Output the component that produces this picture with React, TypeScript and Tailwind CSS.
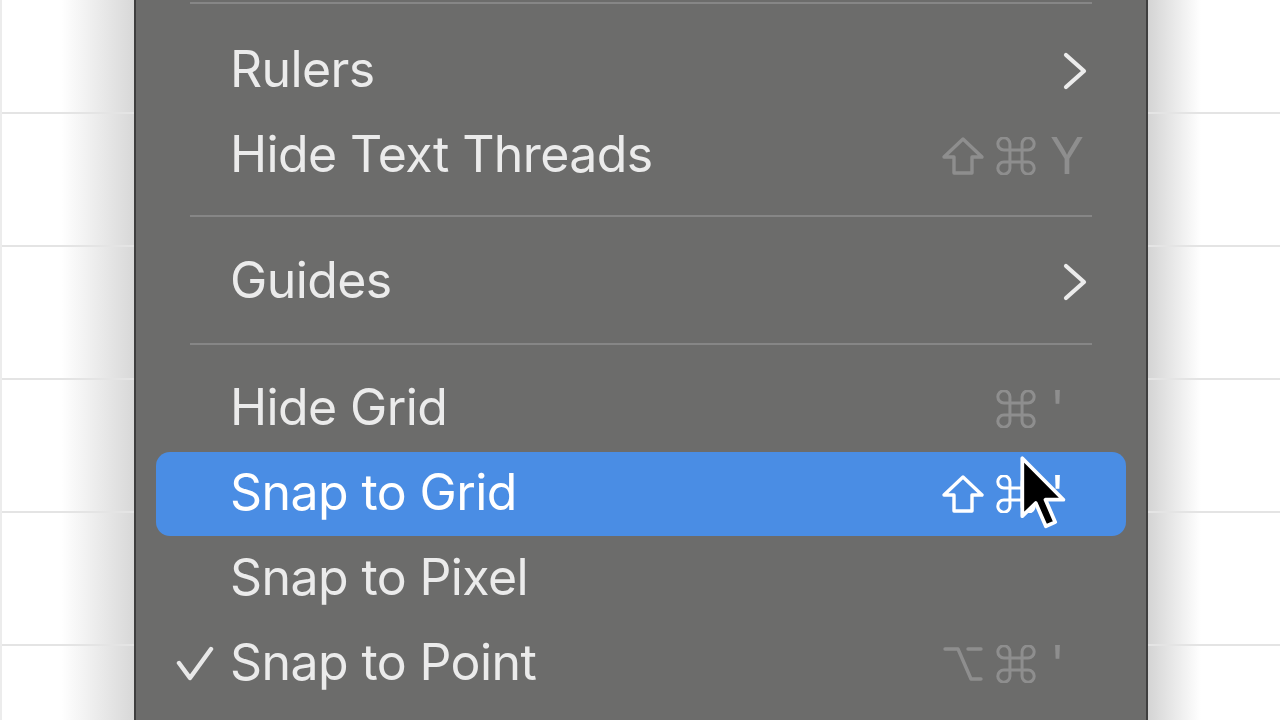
import React from "react";

const FONT = { fontFamily: "Inter, 'Noto Sans', 'Liberation Sans', sans-serif" };

function GridStrip({ className }: { className: string }) {
  return (
    <div className={`flex flex-col ${className}`}>
      <div className="h-[114px] shrink-0 border-b-2 border-[#e4e4e4]" />
      <div className="h-[133px] shrink-0 border-b-2 border-[#e4e4e4]" />
      <div className="h-[133px] shrink-0 border-b-2 border-[#e4e4e4]" />
      <div className="h-[133px] shrink-0 border-b-2 border-[#e4e4e4]" />
      <div className="h-[133px] shrink-0 border-b-2 border-[#e4e4e4]" />
    </div>
  );
}

function Shift({ color }: { color: string }) {
  return (
    <svg width="44" height="40" viewBox="0 0 44 40" fill="none">
      <path
        d="M22 3 L41 21 L31 21 L31 37 L13 37 L13 21 L3 21 Z"
        stroke={color}
        strokeWidth="3.4"
        strokeLinejoin="round"
      />
    </svg>
  );
}

function Cmd({ color }: { color: string }) {
  return (
    <svg width="40" height="38" viewBox="2.6 2.6 18.8 18.8" fill="none">
      <path
        d="M18 3a3 3 0 0 0-3 3v12a3 3 0 0 0 3 3 3 3 0 0 0 3-3 3 3 0 0 0-3-3H6a3 3 0 0 0-3 3 3 3 0 0 0 3 3 3 3 0 0 0 3-3V6a3 3 0 0 0-3-3 3 3 0 0 0-3 3 3 3 0 0 0 3 3h12a3 3 0 0 0 3-3 3 3 0 0 0-3-3z"
        stroke={color}
        strokeWidth="1.5"
      />
    </svg>
  );
}

function Opt({ color }: { color: string }) {
  return (
    <svg width="40" height="38" viewBox="0 0 40 38" fill="none">
      <path d="M2 4 H15 L28 34 H38" stroke={color} strokeWidth="3.4" strokeLinecap="round" strokeLinejoin="round" />
      <path d="M25 4 H38" stroke={color} strokeWidth="3.4" strokeLinecap="round" />
    </svg>
  );
}

function Chevron() {
  return (
    <svg width="26" height="38" viewBox="0 0 26 38" fill="none">
      <path d="M4 3 L22 19 L4 35" stroke="#ececec" strokeWidth="4.2" strokeLinecap="round" strokeLinejoin="round" />
    </svg>
  );
}

function Check() {
  return (
    <svg width="38" height="36" viewBox="0 0 38 36" fill="none">
      <path d="M3 17 L14 32 L35 3" stroke="#e8e8e8" strokeWidth="4.4" strokeLinecap="round" strokeLinejoin="round" />
    </svg>
  );
}

type Mod = "shift" | "opt" | null;

function Shortcut({ mod, keyLabel, color }: { mod: Mod; keyLabel: string; color: string }) {
  return (
    <div className="ml-auto flex items-center">
      <div className="w-[46px] flex justify-center">
        {mod === "shift" && <Shift color={color} />}
        {mod === "opt" && <Opt color={color} />}
      </div>
      <div className="w-[8px]" />
      <div className="w-[44px] flex justify-center">
        <Cmd color={color} />
      </div>
      <div className="w-[10px]" />
      <div className="w-[40px] pl-[2px] text-[50px] leading-none" style={{ color }}>
        {keyLabel}
      </div>
    </div>
  );
}

function Row({
  label,
  right,
  highlighted,
  checked,
}: {
  label: string;
  right?: React.ReactNode;
  highlighted?: boolean;
  checked?: boolean;
}) {
  return (
    <div className="h-[85px] shrink-0 flex items-center">
      <div
        className={`mx-[20px] flex-1 h-[84px] rounded-[14px] flex items-center pr-[38px] ${
          highlighted ? "bg-[#4a8de4] text-white" : "text-[#ebebeb]"
        }`}
      >
        <div className="w-[74px] shrink-0 pl-[20px] flex items-center">{checked && <Check />}</div>
        <div className="text-[50px] leading-none tracking-[-0.6px] pb-[3px]">{label}</div>
        {right}
      </div>
    </div>
  );
}

function Sep({ top, bottom }: { top: number; bottom: number }) {
  return (
    <div className="shrink-0 flex flex-col" style={{ paddingTop: top, paddingBottom: bottom }}>
      <div className="mx-[54px] h-[2px] bg-[#868686]" />
    </div>
  );
}

export default function App() {
  const dim = "#8e8e8e";
  return (
    <div className="relative w-[1280px] h-[720px] overflow-hidden bg-white flex" style={FONT}>
      <GridStrip className="w-[134px] shrink-0 border-l-2 border-[#ececec] bg-linear-to-r from-white from-45% to-[#d8d8d8]" />

      <div className="w-[1014px] shrink-0 bg-[#6c6c6b] border-x-2 border-[#3f3f3f] flex flex-col">
        <Sep top={2} bottom={24} />
        <Row label="Rulers" right={<div className="ml-auto"><Chevron /></div>} />
        <Row label="Hide Text Threads" right={<Shortcut mod="shift" keyLabel="Y" color={dim} />} />
        <Sep top={17} bottom={22} />
        <Row label="Guides" right={<div className="ml-auto"><Chevron /></div>} />
        <Sep top={19} bottom={21} />
        <Row label="Hide Grid" right={<Shortcut mod={null} keyLabel="'" color={dim} />} />
        <Row label="Snap to Grid" highlighted right={<Shortcut mod="shift" keyLabel="'" color="#ffffff" />} />
        <Row label="Snap to Pixel" />
        <Row label="Snap to Point" checked right={<Shortcut mod="opt" keyLabel="'" color={dim} />} />
      </div>

      <GridStrip className="flex-1 bg-linear-to-r from-[#d4d4d4] via-white via-40% to-white" />

      <svg
        className="absolute left-[1011px] top-[447px]"
        width="60"
        height="86"
        viewBox="-2 -2 16 23"
        fill="none"
      >
        <path
          d="M1 1 L1 16.5 L4.6 13 L7.3 19.2 L9.8 18.1 L7.2 12.1 L12 12.1 Z"
          fill="#000"
          stroke="#fff"
          strokeWidth="1"
          strokeLinejoin="round"
        />
      </svg>
    </div>
  );
}
